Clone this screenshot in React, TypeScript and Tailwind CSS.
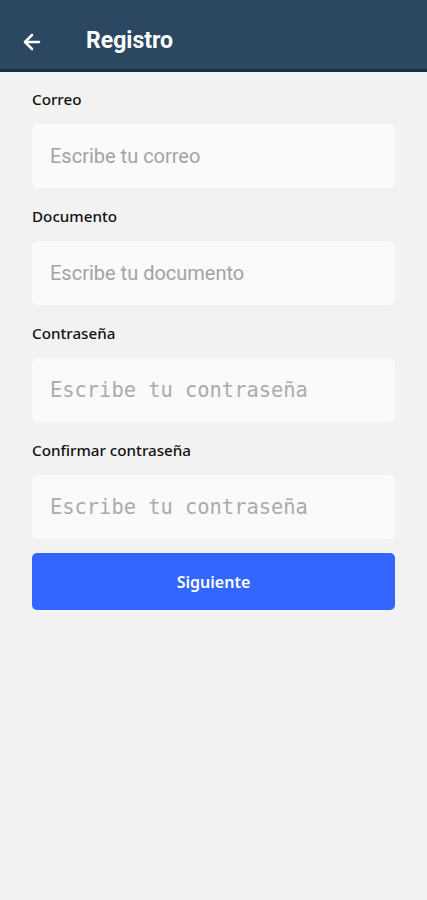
import { ArrowLeft } from "lucide-react";

const fields = [
  { label: "Correo", placeholder: "Escribe tu correo", mono: false },
  { label: "Documento", placeholder: "Escribe tu documento", mono: false },
  { label: "Contraseña", placeholder: "Escribe tu contraseña", mono: true },
  { label: "Confirmar contraseña", placeholder: "Escribe tu contraseña", mono: true },
];

export default function App() {
  return (
    <div className="min-h-[900px] w-full bg-[#f2f2f2]" style={{ fontFamily: "Roboto, sans-serif" }}>
      <header className="h-[72px] bg-[#2c4761] border-b-[3px] border-[#1a2e42] flex items-center pt-[14px] px-[20px]">
        <ArrowLeft className="w-[24px] h-[24px] text-white" strokeWidth={2.5} />
        <h1 className="ml-[42px] text-[23px] font-bold text-white">Registro</h1>
      </header>

      <div className="px-[32px] pt-[17px] flex flex-col">
        {fields.map((f, i) => (
          <div key={i} className="flex flex-col">
            <label
              className={`text-[15.2px] leading-[20px] font-medium text-[#111] ${i === 0 ? "" : "mt-[18px]"}`}
              style={{ fontFamily: "'Noto Sans', sans-serif" }}
            >
              {f.label}
            </label>
            <input
              type={f.mono ? "password" : "text"}
              placeholder={f.placeholder}
              className={`mt-[15px] h-[64px] rounded-[6px] bg-[#fafafa] px-[18px] outline-none placeholder:text-[#a3a3a3] ${
                f.mono ? "text-[20.4px] font-['DejaVu_Sans_Mono',monospace] placeholder:text-[#ababab]" : "text-[20px]"
              }`}
            />
          </div>
        ))}

        <button
          className="mt-[14px] h-[57px] rounded-[5px] bg-[#3366ff] text-white text-[16px] font-semibold"
          style={{ fontFamily: "'Noto Sans', sans-serif" }}
        >
          Siguiente
        </button>
      </div>
    </div>
  );
}
